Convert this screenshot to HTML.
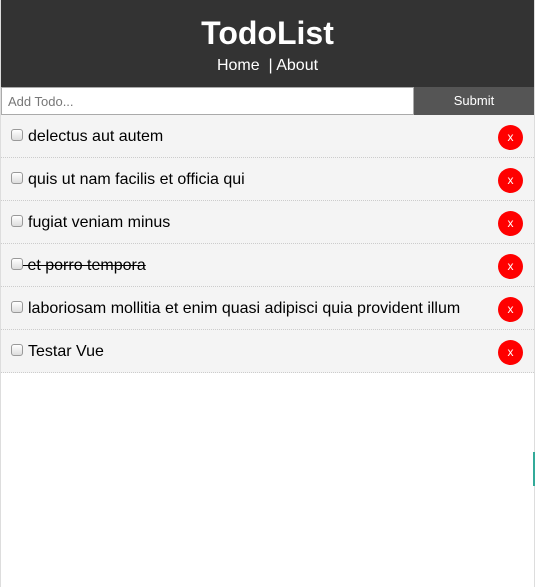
<!DOCTYPE html>
<html><head><style>
*{box-sizing:border-box;margin:0;padding:0}
body{width:536px;height:587px;background:#fff;font-family:"Liberation Sans",Arial,sans-serif;position:relative;overflow:hidden}
.wrap{position:absolute;left:0;top:0;width:535px;height:587px;border-right:1px solid #ddd;border-left:1px solid #ddd}
header{background:#333;height:87px;color:#fff;text-align:center}
h1{font-size:32px;font-weight:bold;padding-top:15px;line-height:36px}
nav{font-size:16px;margin-top:6px}
form{display:flex;height:28px}
input{flex:1;border:1px solid #aaa;font-size:13px;padding-left:6px;font-family:inherit;color:#777;height:28px;background:#fff}
.btn{width:120px;background:#555;color:#fff;font-size:13px;text-align:center;line-height:28px}
.item{height:43px;background:#f4f4f4;border-bottom:1px dotted #ccc;position:relative;font-size:16px;color:#000}
.cb{position:absolute;left:10px;top:14px;width:12px;height:12px;border:1px solid #999;border-radius:3px;background:linear-gradient(#fff,#ddd)}
.t{position:absolute;left:27px;top:13px}
.x{position:absolute;right:11px;top:10px;width:25px;height:25px;border-radius:50%;background:#f00;color:#fff;font-size:12px;text-align:center;line-height:25px}
.g{position:absolute;right:-1px;top:452px;width:2px;height:34px;background:#3a9}
</style></head><body><div class="wrap">
<header><h1>TodoList</h1><nav>Home &nbsp;| About</nav></header>
<form><input value="Add Todo..."><div class="btn">Submit</div></form>
<div class="item"><span class="cb"></span><span class="t">delectus aut autem</span><span class="x">x</span></div>
<div class="item"><span class="cb"></span><span class="t">quis ut nam facilis et officia qui</span><span class="x">x</span></div>
<div class="item"><span class="cb"></span><span class="t">fugiat veniam minus</span><span class="x">x</span></div>
<div class="item"><span class="cb"></span><span class="t" style="text-decoration:line-through;left:22px">&nbsp;et porro tempora</span><span class="x">x</span></div>
<div class="item"><span class="cb"></span><span class="t">laboriosam mollitia et enim quasi adipisci quia provident illum</span><span class="x">x</span></div>
<div class="item"><span class="cb"></span><span class="t">Testar Vue</span><span class="x">x</span></div>
<div class="g"></div>
</div></body></html>
